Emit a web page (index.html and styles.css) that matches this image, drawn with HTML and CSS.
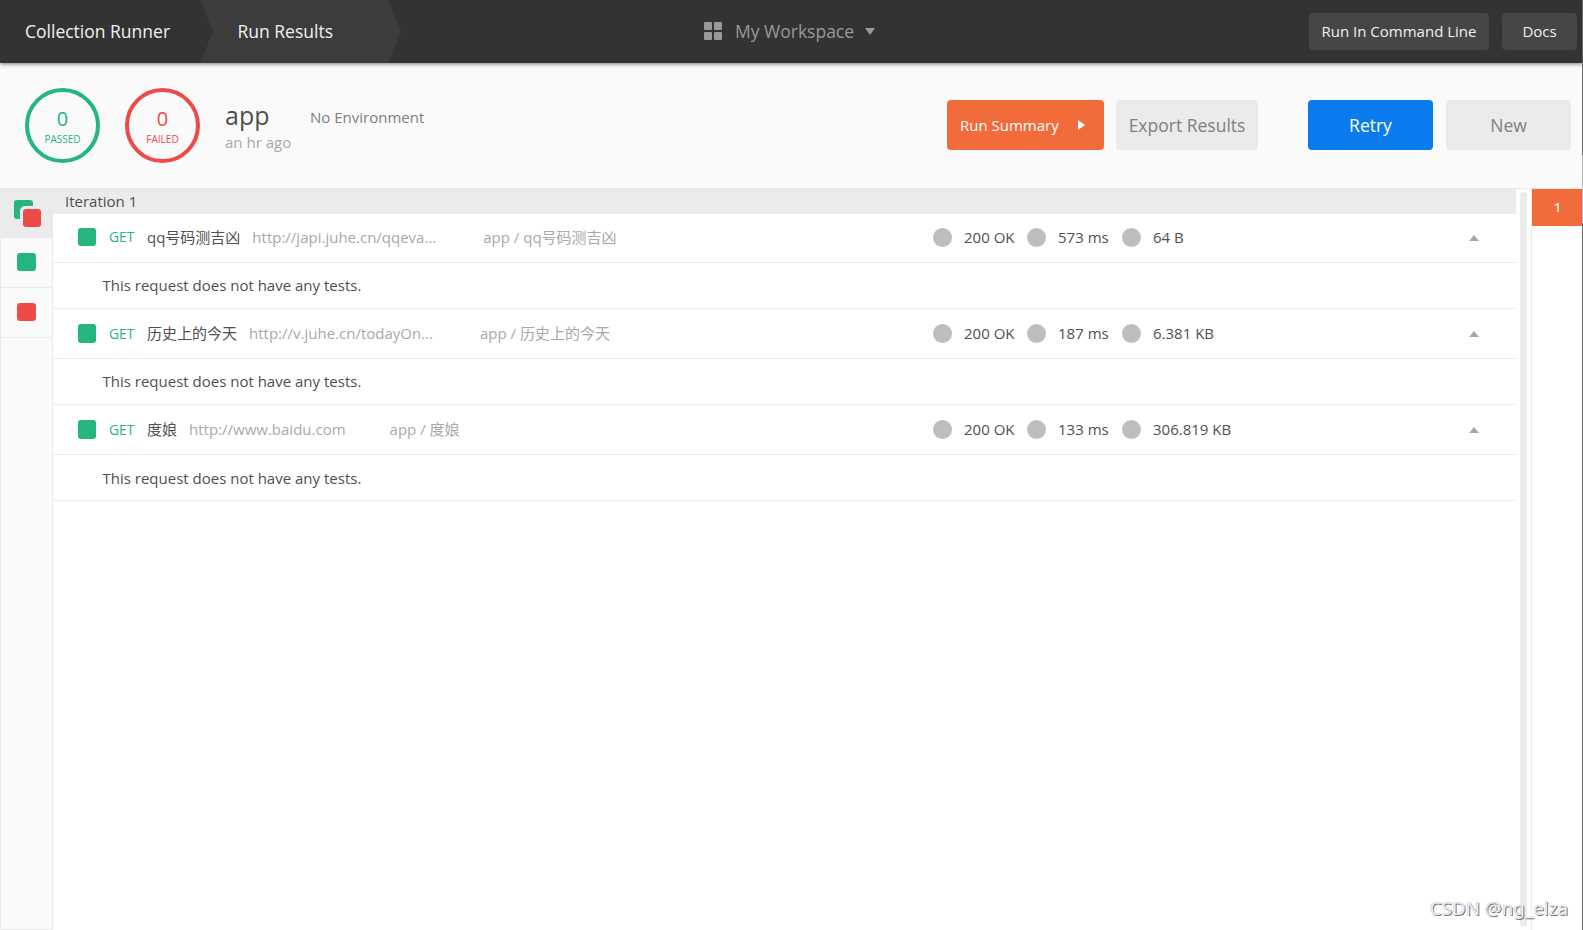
FILE: index.html
```html
<!DOCTYPE html>
<html lang="en">
<head>
    <meta charset="UTF-8">
    <title>Collection Runner</title>
    <link rel="stylesheet" href="styles.css">
</head>
<body>
    <header class="header">
        <div class="tab">Collection Runner</div>
        <div class="tab active">Run Results</div>
        <div class="workspace">
            <svg class="grid-icon" width="18" height="18" viewBox="0 0 18 18">
                <rect x="0" y="0" width="8" height="8" rx="1"/>
                <rect x="10" y="0" width="8" height="8" rx="1"/>
                <rect x="0" y="10" width="8" height="8" rx="1"/>
                <rect x="10" y="10" width="8" height="8" rx="1"/>
            </svg>
            <span>My Workspace</span>
            <svg class="caret" width="10" height="7" viewBox="0 0 10 7"><path d="M0 0h10L5 7z"/></svg>
        </div>
        <div class="header-buttons">
            <button class="header-btn">Run In Command Line</button>
            <button class="header-btn docs">Docs</button>
        </div>
    </header>

    <section class="summary">
        <div class="circle passed"><span class="count">0</span><span>PASSED</span></div>
        <div class="circle failed"><span class="count">0</span><span>FAILED</span></div>
        <div class="run-info">
            <h1>app</h1>
            <p>an hr ago</p>
        </div>
        <div class="environment">No Environment</div>
        <div class="actions">
            <button class="btn orange">Run Summary
                <svg width="7" height="10" viewBox="0 0 7 10"><path d="M0 0l7 5-7 5z"/></svg>
            </button>
            <button class="btn export">Export Results</button>
            <button class="btn blue">Retry</button>
            <button class="btn new">New</button>
        </div>
    </section>

    <main class="content">
        <!-- Result filters -->
        <aside class="filters">
            <div class="filter selected">
                <svg width="27" height="27" viewBox="0 0 27 27">
                    <rect class="green" width="19" height="19" rx="3"/>
                    <rect class="cutout" x="6" y="6" width="21" height="21" rx="5"/>
                    <rect class="red" x="9" y="9" width="18" height="18" rx="3"/>
                </svg>
            </div>
            <div class="filter"><span class="square"></span></div>
            <div class="filter"><span class="square fail"></span></div>
        </aside>

        <!-- Requests -->
        <section class="results">
            <div class="iteration">Iteration 1</div>

            <div class="request">
                <span class="square"></span>
                <span class="method">GET</span>
                <span class="name">qq号码测吉凶</span>
                <span class="url">http://japi.juhe.cn/qqeva...</span>
                <span class="path">app / qq号码测吉凶</span>
                <div class="stats">
                    <span class="dot"></span><span class="status">200 OK</span>
                    <span class="dot"></span><span class="time">573 ms</span>
                    <span class="dot"></span><span class="size">64 B</span>
                </div>
                <svg class="toggle" width="10" height="6" viewBox="0 0 10 6"><path d="M0 6h10L5 0z"/></svg>
            </div>
            <div class="tests">This request does not have any tests.</div>

            <div class="request">
                <span class="square"></span>
                <span class="method">GET</span>
                <span class="name">历史上的今天</span>
                <span class="url">http://v.juhe.cn/todayOn...</span>
                <span class="path">app / 历史上的今天</span>
                <div class="stats">
                    <span class="dot"></span><span class="status">200 OK</span>
                    <span class="dot"></span><span class="time">187 ms</span>
                    <span class="dot"></span><span class="size">6.381 KB</span>
                </div>
                <svg class="toggle" width="10" height="6" viewBox="0 0 10 6"><path d="M0 6h10L5 0z"/></svg>
            </div>
            <div class="tests">This request does not have any tests.</div>

            <div class="request">
                <span class="square"></span>
                <span class="method">GET</span>
                <span class="name">度娘</span>
                <span class="url short">http://www.baidu.com</span>
                <span class="path">app / 度娘</span>
                <div class="stats">
                    <span class="dot"></span><span class="status">200 OK</span>
                    <span class="dot"></span><span class="time">133 ms</span>
                    <span class="dot"></span><span class="size">306.819 KB</span>
                </div>
                <svg class="toggle" width="10" height="6" viewBox="0 0 10 6"><path d="M0 6h10L5 0z"/></svg>
            </div>
            <div class="tests last">This request does not have any tests.</div>
        </section>

        <div class="scrollbar"><div class="thumb"></div></div>
        <nav class="iterations"><div class="iteration-number">1</div></nav>
    </main>

    <div class="window-edge"></div>
    <div class="watermark">CSDN @ng_elza</div>
</body>
</html>
```
FILE: styles.css
```css
* { box-sizing: border-box; }
body {
    margin: 0;
    height: 930px;
    display: flex;
    flex-direction: column;
    overflow: hidden;
    position: relative;
    background: #fff;
    color: #505050;
    font-family: "Open Sans", "Noto Sans CJK SC", sans-serif;
    font-size: 15px;
}
h1, p { margin: 0; font-weight: normal; }
button { border: none; padding: 0; font-family: inherit; border-radius: 4px; }
svg { display: block; flex: none; }

/* Header */
.header {
    height: 63px;
    flex: none;
    display: flex;
    align-items: center;
    position: relative;
    z-index: 1;
    background: #333;
    color: #f0f0f0;
    box-shadow: 0 1px 4px rgba(0,0,0,0.5);
}
.tab { width: 200px; padding-left: 25px; font-size: 17.5px; line-height: 63px; white-space: nowrap; }
.tab.active {
    width: 201px;
    padding-left: 37.5px;
    background: #3c3c3c;
    clip-path: polygon(0 0, 188px 0, 100% 50%, 188px 100%, 0 100%, 13px 50%);
}
.workspace { display: flex; align-items: center; margin-left: 303px; color: #999; font-size: 17.5px; white-space: nowrap; }
.workspace svg { fill: #999; }
.workspace .grid-icon { margin-bottom: 1px; }
.workspace span { margin: 0 11px 0 13px; width: 119px; padding-bottom: 2px; }
.header-buttons { display: flex; gap: 13px; margin-left: auto; padding-right: 6px; }
.header-btn { width: 180px; height: 37px; padding-bottom: 2px; background: #464646; color: #f0f0f0; font-size: 15px; }
.header-btn.docs { width: 75px; }

/* Run summary */
.summary {
    height: 126px;
    flex: none;
    display: flex;
    align-items: flex-start;
    padding: 25px 12px 0 25px;
    background: #fafafa;
    border-bottom: 1px solid #ebebeb;
}
.circle {
    width: 75px;
    height: 75px;
    margin-right: 25px;
    padding-top: 16px;
    border: 4px solid;
    border-radius: 50%;
    display: flex;
    flex-direction: column;
    align-items: center;
    font-size: 10px;
    line-height: 18px;
}
.circle .count { font-size: 20px; line-height: 22px; }
.circle.passed { color: #26b47f; }
.circle.failed { color: #ed4b48; }
.run-info { width: 85px; }
.run-info h1 { font-size: 25px; line-height: 34px; margin-top: 10px; }
.run-info p { color: #a9a9a9; line-height: 20px; }
.environment { color: #808080; line-height: 20px; padding-top: 19px; }
.actions { display: flex; margin: 12px 0 0 auto; }
.btn { height: 50px; font-size: 17.5px; background: #ebebeb; color: #808080; }
.btn.orange {
    display: flex;
    align-items: center;
    justify-content: space-between;
    width: 157px;
    padding: 0 19px 0 13px;
    margin-right: 12px;
    background: #f26b3a;
    color: #fff;
    font-size: 15px;
}
.btn.orange svg { fill: #fff; }
.btn.export { width: 142px; margin-right: 50px; }
.btn.blue { width: 125px; margin-right: 13px; background: #097bed; color: #fff; }
.btn.new { width: 125px; }

/* Results */
.content { flex: 1; display: flex; min-height: 0; }
.filters { width: 53px; height: 741px; background: #fafafa; border: 1px solid #ebebeb; border-top: none; }
.filter { height: 50px; display: flex; align-items: center; justify-content: center; padding-bottom: 1px; border-bottom: 1px solid #ebebeb; }
.filter.selected { height: 49px; background: #ebebeb; padding: 1px 0 0 2px; }
.green { fill: #26b47f; }
.red { fill: #ed4b48; }
.cutout { fill: #ebebeb; }
.square { width: 19px; height: 18px; flex: none; border-radius: 3px; background: #26b47f; }
.square.fail { background: #ed4b48; }
.results { width: 1463px; position: relative; }
.iteration { height: 25px; line-height: 25px; padding-left: 12px; background: #ebebeb; }
.request { height: 50px; display: flex; align-items: center; padding: 0 37px 0 25px; border-bottom: 1px solid #ebebeb; line-height: 20px; white-space: nowrap; position: relative; }
.request .square { width: 18px; height: 19px; }
.method { width: 26px; margin: 0 12px 0 13px; color: #26b47f; font-size: 13.75px; }
.name { margin-right: 12px; }
.url { color: #a9a9a9; margin-right: 47px; }
.url.short { margin-right: 44px; }
.path { color: #a9a9a9; }
.name, .url, .path, .status, .time, .size { padding-bottom: 2px; }
/* stats start in the same column however long the names are */
.stats { position: absolute; left: 880px; display: flex; align-items: center; }
.dot { width: 19px; height: 19px; margin-right: 12px; border-radius: 50%; background: #bebebe; }
.status { width: 63px; }
.time { width: 64px; }
.toggle { margin-left: auto; fill: #a9a9a9; }
.tests { height: 46px; line-height: 44px; padding-left: 49.5px; border-bottom: 1px solid #ebebeb; }
.tests.last { line-height: 46px; }
/* first row is a pixel shorter */
.iteration + .request { height: 49px; padding-bottom: 2px; }
.iteration + .request .square { height: 18px; }
.iteration + .request .name, .iteration + .request .url, .iteration + .request .path,
.iteration + .request .status, .iteration + .request .time, .iteration + .request .size { padding-bottom: 0; }
.iteration + .request .toggle { margin-top: 1px; }
.scrollbar { width: 15px; padding: 3px 4px; }
.thumb { height: 735px; width: 7px; border-radius: 4px; background: #ebebeb; }
.iterations { width: 52px; border-left: 1px solid #ebebeb; }
.iteration-number { height: 37px; line-height: 37px; background: #f26b3a; color: #f0f0f0; text-align: center; font-size: 12.5px; font-weight: 600; }

.window-edge { position: absolute; z-index: 2; right: 0; top: 0; width: 1px; height: 930px; background: linear-gradient(#666 155px, #bbb 155px, #bbb 223px, #666 223px); }
.watermark {
    position: absolute;
    right: 15px;
    bottom: 9px;
    color: #eee;
    font-family: "Noto Sans", sans-serif;
    font-size: 18.8px;
    line-height: 26px;
    text-shadow: 1px 1px 0 #777, 0 0 1px #aaa;
}
```
